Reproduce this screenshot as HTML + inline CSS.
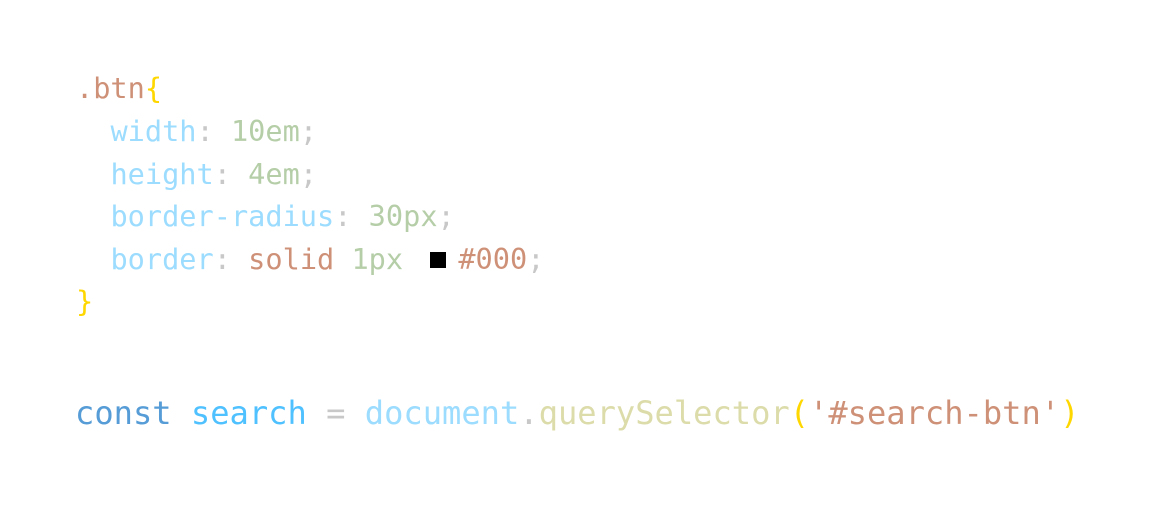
<!DOCTYPE html>
<html><head><meta charset="utf-8"><style>
html,body{margin:0;padding:0;background:#fff;width:1172px;height:517px;overflow:hidden}
.l{position:absolute;white-space:pre;font-family:"DejaVu Sans Mono","Liberation Mono",monospace;line-height:1}
.t{font-size:28.6px;left:76px}
.b{font-size:32.1px;left:75px}
.br{color:#ce9178}.lb{color:#9cdcfe}.gr{color:#b5cea8}.gy{color:#c8c8c8}.y{color:#ffd700}
.k{color:#569cd6}.v{color:#4fc1ff}.f{color:#dcdcaa}
.sw{display:inline-block;width:16px;height:16px;background:#000;margin:0 12px 0 10px;vertical-align:1px}
</style></head><body>
<div class="l t" style="top:74px"><span class="br">.btn</span><span class="y">{</span></div>
<div class="l t" style="top:117px">  <span class="lb">width</span><span class="gy">: </span><span class="gr">10em</span><span class="gy">;</span></div>
<div class="l t" style="top:160px">  <span class="lb">height</span><span class="gy">: </span><span class="gr">4em</span><span class="gy">;</span></div>
<div class="l t" style="top:202px">  <span class="lb">border-radius</span><span class="gy">: </span><span class="gr">30px</span><span class="gy">;</span></div>
<div class="l t" style="top:245px">  <span class="lb">border</span><span class="gy">: </span><span class="br">solid</span> <span class="gr">1px</span> <span class="sw"></span><span class="br">#000</span><span class="gy">;</span></div>
<div class="l t" style="top:287px"><span class="y">}</span></div>
<div class="l b" style="top:397px"><span class="k">const</span> <span class="v">search</span> <span class="gy">=</span> <span class="lb">document</span><span class="gy">.</span><span class="f">querySelector</span><span class="y">(</span><span class="br">'#search-btn'</span><span class="y">)</span></div>
</body></html>
